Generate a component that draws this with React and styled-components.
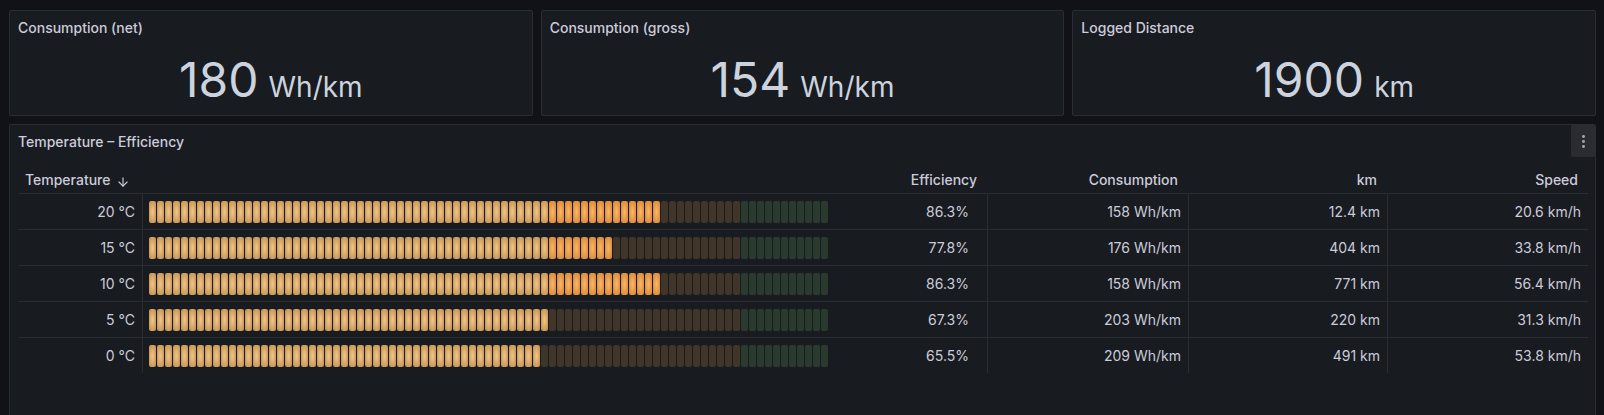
import React from "react";
import styled, { createGlobalStyle } from "styled-components";
import { ArrowDown, EllipsisVertical } from "lucide-react";

const GlobalStyle = createGlobalStyle`
  html, body {
    margin: 0;
    padding: 0;
    background: #111217;
    overflow: hidden;
  }
  body {
    font-family: Inter, "Noto Sans", sans-serif;
    color: #ccccdc;
    -webkit-font-smoothing: antialiased;
  }
  * { box-sizing: border-box; }
`;

const stats = [
  { title: "Consumption (net)", value: "180", unit: "Wh/km" },
  { title: "Consumption (gross)", value: "154", unit: "Wh/km" },
  { title: "Logged Distance", value: "1900", unit: "km" },
];

const rows = [
  { temp: "20 °C", eff: 86.3, cons: "158 Wh/km", km: "12.4 km", speed: "20.6 km/h" },
  { temp: "15 °C", eff: 77.8, cons: "176 Wh/km", km: "404 km", speed: "33.8 km/h" },
  { temp: "10 °C", eff: 86.3, cons: "158 Wh/km", km: "771 km", speed: "56.4 km/h" },
  { temp: "5 °C", eff: 67.3, cons: "203 Wh/km", km: "220 km", speed: "31.3 km/h" },
  { temp: "0 °C", eff: 65.5, cons: "209 Wh/km", km: "491 km", speed: "53.8 km/h" },
];

// LCD gauge: 85 cells over 0..115 %, thresholds at 67 (orange) and 100 (green)
const CELLS = 85;
const MAX = 115;

const tones = {
  tan: { base: "#b88a50", glow: "#f0c07c", dim: "#3e352a" },
  orange: { base: "#cf8438", glow: "#fbb05c", dim: "#41352a" },
  green: { base: "#62a85a", glow: "#92d488", dim: "#2b3a2f" },
};

const toneFor = (i) => {
  const v = (i * MAX) / CELLS;
  if (v >= 100) return tones.green;
  if (v >= 67) return tones.orange;
  return tones.tan;
};

const COLUMNS = "124px 1fr 201px 199px 201px";

export default function App() {
  return (
    <>
      <GlobalStyle />
      <Page>
        <StatRow>
          {stats.map((s) => (
            <Panel key={s.title}>
              <PanelHeader>
                <PanelTitle>{s.title}</PanelTitle>
              </PanelHeader>
              <StatBody>
                <StatText>
                  {s.value}
                  <StatUnit>{s.unit}</StatUnit>
                </StatText>
              </StatBody>
            </Panel>
          ))}
        </StatRow>

        <TablePanel>
          <PanelHeader>
            <PanelTitle>Temperature – Efficiency</PanelTitle>
            <MenuButton>
              <EllipsisVertical size={17} strokeWidth={2.2} />
            </MenuButton>
          </PanelHeader>
          <Table>
            <HeaderRow>
              <HeaderCell $left>
                Temperature
                <ArrowDown size={14} strokeWidth={2} />
              </HeaderCell>
              <HeaderCell>Efficiency</HeaderCell>
              <HeaderCell>Consumption</HeaderCell>
              <HeaderCell>km</HeaderCell>
              <HeaderCell>Speed</HeaderCell>
            </HeaderRow>
            {rows.map((r, idx) => {
              const lit = Math.floor((r.eff * CELLS) / MAX) + 1;
              return (
                <DataRow key={idx} $last={idx === rows.length - 1}>
                  <Cell>{r.temp}</Cell>
                  <GaugeCell $divided>
                    <Gauge>
                      {Array.from({ length: CELLS }, (_, i) => (
                        <GaugeSeg key={i} $lit={i < lit} $tone={toneFor(i)} />
                      ))}
                    </Gauge>
                    <GaugeValue>{r.eff.toFixed(1)}%</GaugeValue>
                  </GaugeCell>
                  <Cell $divided>{r.cons}</Cell>
                  <Cell $divided>{r.km}</Cell>
                  <Cell $divided>{r.speed}</Cell>
                </DataRow>
              );
            })}
          </Table>
        </TablePanel>
      </Page>
    </>
  );
}

const Page = styled.div`
  display: flex;
  flex-direction: column;
  gap: 8px;
  padding: 10px 8px 0 9px;
`;

const StatRow = styled.div`
  display: grid;
  grid-template-columns: repeat(3, 1fr);
  gap: 8px;
`;

const Panel = styled.div`
  display: flex;
  flex-direction: column;
  height: 106px;
  background: #181b1f;
  border: 1px solid #2a2d33;
  border-radius: 2px;
`;

const TablePanel = styled(Panel)`
  height: 300px;
`;

const PanelHeader = styled.div`
  display: flex;
  align-items: center;
  height: 32px;
  padding-left: 8px;
  flex-shrink: 0;
`;

const PanelTitle = styled.h2`
  margin: 0;
  font-size: 14px;
  font-weight: 500;
  color: #ccccdc;
`;

const MenuButton = styled.button`
  margin-left: auto;
  width: 24px;
  height: 32px;
  display: flex;
  align-items: center;
  justify-content: center;
  border: none;
  padding: 0;
  background: #2a2c32;
  color: #a3a7b0;
  border-radius: 2px;
`;

const StatBody = styled.div`
  flex: 1;
  display: flex;
  align-items: center;
  justify-content: center;
  padding-top: 2px;
`;

const StatText = styled.span`
  font-size: 48px;
  line-height: 1;
  font-weight: 400;
  color: #ccd3de;
`;

const StatUnit = styled.span`
  font-size: 28px;
  margin-left: 10px;
`;

const Table = styled.div`
  padding: 4px 7px 0 8px;
  font-size: 14px;
`;

const HeaderRow = styled.div`
  display: grid;
  grid-template-columns: ${COLUMNS};
  height: 33px;
  padding-top: 4px;
  border-bottom: 1px solid #2a2d33;
`;

const HeaderCell = styled.div`
  display: flex;
  align-items: center;
  gap: 6px;
  justify-content: ${(p) => (p.$left ? "flex-start" : "flex-end")};
  padding: ${(p) => (p.$left ? "0 0 0 7px" : "0 10px 0 0")};
  font-weight: 500;
  color: #ccccdc;

  svg {
    margin-top: 5px;
  }
`;

const DataRow = styled.div`
  display: grid;
  grid-template-columns: ${COLUMNS};
  height: 36px;
  border-bottom: 1px solid ${(p) => (p.$last ? "transparent" : "#2a2d33")};
`;

const Cell = styled.div`
  display: flex;
  align-items: center;
  justify-content: flex-end;
  padding-right: 7px;
  color: #ccccdc;
  border-left: 1px solid ${(p) => (p.$divided ? "#2a2d33" : "transparent")};
`;

const GaugeCell = styled(Cell)`
  justify-content: space-between;
  padding: 0 18px 0 6px;
`;

const Gauge = styled.div`
  display: flex;
  gap: 1px;
`;

const GaugeSeg = styled.span`
  width: 7px;
  height: 22px;
  border-radius: 2px;
  background: ${(p) =>
    p.$lit
      ? `radial-gradient(${p.$tone.glow} 10%, ${p.$tone.base})`
      : p.$tone.dim};
`;

const GaugeValue = styled.span`
  color: #ccccdc;
`;
